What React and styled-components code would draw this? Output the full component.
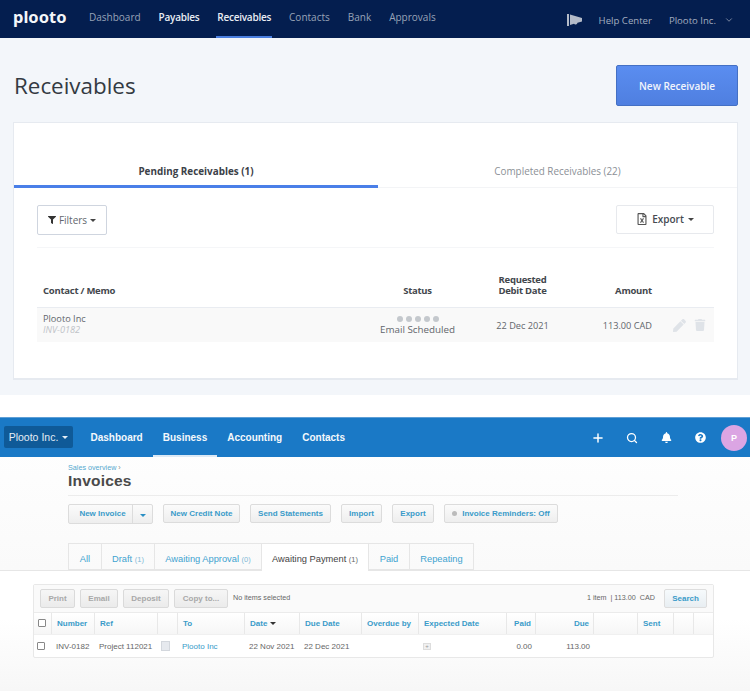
import React from 'react'
import styled, { createGlobalStyle } from 'styled-components'
import { FaBell, FaFilter, FaPen, FaQuestionCircle, FaRegFileExcel, FaTrash } from 'react-icons/fa'
import { FiChevronDown, FiPlus, FiSearch } from 'react-icons/fi'

const Global = createGlobalStyle`
  html, body { margin: 0; padding: 0; background: #fff; }
  body { width: 750px; height: 691px; overflow: hidden; font-family: "Open Sans", sans-serif; }
  * { box-sizing: border-box; }
`

const invoiceCols = '18px 43px 63px 20px 67px 55px 62px 57px 88px 29px 58px 44px 36px 20px 19px'

const App = () => {
  return (
    <>
      <Global />
      <Plooto>
        <TopNav>
          <Logo>plooto</Logo>
          <TopLinks>
            <TopLink>Dashboard</TopLink>
            <TopLink $bright>Payables</TopLink>
            <TopLink $active>Receivables</TopLink>
            <TopLink>Contacts</TopLink>
            <TopLink>Bank</TopLink>
            <TopLink>Approvals</TopLink>
          </TopLinks>
          <TopRight>
            <svg width="15" height="12" viewBox="0 0 15 12">
              <path d="M0 0h2v12H0zM3 .5 15 4v3.5l-4.500 1.300a2 2 0 0 1-3.500 1L3 11z" fill="#b4bbc8" />
            </svg>
            <HelpText>Help Center</HelpText>
            <HelpText>Plooto Inc.</HelpText>
            <FiChevronDown size={10} color="#8f9ab0" />
          </TopRight>
        </TopNav>

        <PageHead>
          <PageTitle>Receivables</PageTitle>
          <PrimaryButton>New Receivable</PrimaryButton>
        </PageHead>

        <Card>
          <Tabs>
            <Tab $active>Pending Receivables (1)</Tab>
            <Tab>Completed Receivables (22)</Tab>
          </Tabs>
          <CardBody>
            <Toolbar>
              <FilterButton>
                <FaFilter size={8} color="#333" />
                Filters
                <Caret />
              </FilterButton>
              <ExportButton>
                <FaRegFileExcel size={12} color="#555" />
                Export
                <Caret />
              </ExportButton>
            </Toolbar>
            <HeadRow>
              <div>Contact / Memo</div>
              <Centered>Status</Centered>
              <Centered>Requested<br />Debit Date</Centered>
              <RightCell>Amount</RightCell>
            </HeadRow>
            <BodyRow>
              <div>
                <div>Plooto Inc</div>
                <Memo>INV-0182</Memo>
              </div>
              <StatusCell>
                <Dots>{[0, 1, 2, 3, 4].map((i) => <Dot key={i} />)}</Dots>
                Email Scheduled
              </StatusCell>
              <Centered>22 Dec 2021</Centered>
              <RightCell>113.00 CAD</RightCell>
              <Actions>
                <FaPen size={13} />
                <FaTrash size={12} />
              </Actions>
            </BodyRow>
          </CardBody>
        </Card>
      </Plooto>

      <Xero>
        <XeroNav>
          <OrgButton>Plooto Inc.<OrgCaret /></OrgButton>
          <XeroLinks>
            <XeroLink>Dashboard</XeroLink>
            <XeroLink $active>Business</XeroLink>
            <XeroLink>Accounting</XeroLink>
            <XeroLink>Contacts</XeroLink>
          </XeroLinks>
          <XeroIcons>
            <IconSlot><FiPlus size={14} strokeWidth={2.5} /></IconSlot>
            <IconSlot><FiSearch size={12} strokeWidth={2.5} /></IconSlot>
            <IconSlot><FaBell size={11} /></IconSlot>
            <IconSlot><FaQuestionCircle size={11} /></IconSlot>
            <Avatar>P</Avatar>
          </XeroIcons>
        </XeroNav>

        <Intro>
          <Crumb>Sales overview <span>›</span></Crumb>
          <InvoicesTitle>Invoices</InvoicesTitle>
          <Actionbar>
            <SplitButton>
              <SplitMain>New Invoice</SplitMain>
              <SplitArrow><Caret $color="#2a8fc4" /></SplitArrow>
            </SplitButton>
            <XeroButton $w={77}>New Credit Note</XeroButton>
            <XeroButton $w={81}>Send Statements</XeroButton>
            <XeroButton $w={41}>Import</XeroButton>
            <XeroButton $w={42}>Export</XeroButton>
            <XeroButton $w={114}><GreyDot />Invoice Reminders: Off</XeroButton>
          </Actionbar>
        </Intro>

        <XeroTabs>
          <XeroTab $w={34}>All</XeroTab>
          <XeroTab $w={54}>Draft <small>(1)</small></XeroTab>
          <XeroTab $w={108}>Awaiting Approval <small>(0)</small></XeroTab>
          <XeroTab $w={108} $active>Awaiting Payment <small>(1)</small></XeroTab>
          <XeroTab $w={42}>Paid</XeroTab>
          <XeroTab $w={65}>Repeating</XeroTab>
        </XeroTabs>

        <ListArea>
          <ListBox>
            <ListToolbar>
              <GreyButton $w={35}>Print</GreyButton>
              <GreyButton $w={38}>Email</GreyButton>
              <GreyButton $w={46}>Deposit</GreyButton>
              <GreyButton $w={54}>Copy to...</GreyButton>
              <Selected>No items selected</Selected>
              <Totals>1 item &nbsp;| 113.00 &nbsp;CAD</Totals>
              <SearchButton $w={43}>Search</SearchButton>
            </ListToolbar>
            <ColHead>
              <HeadCell $center><CheckBox /></HeadCell>
              <HeadCell>Number</HeadCell>
              <HeadCell>Ref</HeadCell>
              <HeadCell />
              <HeadCell>To</HeadCell>
              <HeadCell>Date <SortCaret /></HeadCell>
              <HeadCell>Due Date</HeadCell>
              <HeadCell>Overdue by</HeadCell>
              <HeadCell>Expected Date</HeadCell>
              <HeadCell $right>Paid</HeadCell>
              <HeadCell $right>Due</HeadCell>
              <HeadCell />
              <HeadCell>Sent</HeadCell>
              <HeadCell />
              <HeadCell />
            </ColHead>
            <DataRow>
              <DataCell $center><CheckBox /></DataCell>
              <DataCell>INV-0182</DataCell>
              <DataCell>Project 112021</DataCell>
              <DataCell><NoteIcon /></DataCell>
              <DataCell $link>Plooto Inc</DataCell>
              <DataCell>22 Nov 2021</DataCell>
              <DataCell>22 Dec 2021</DataCell>
              <DataCell />
              <DataCell><PlusBox>+</PlusBox></DataCell>
              <DataCell $right>0.00</DataCell>
              <DataCell $right>113.00</DataCell>
              <DataCell />
              <DataCell />
              <DataCell />
              <DataCell />
            </DataRow>
          </ListBox>
        </ListArea>
      </Xero>
    </>
  )
}

export default App

const Plooto = styled.section`
  height: 395px;
  background: #f3f6fa;
`
const TopNav = styled.header`
  height: 38px;
  background: #041e4f;
  display: flex;
  align-items: stretch;
  padding: 0 16px 0 13px;
`
const Logo = styled.div`
  font: 700 16.5px/33px "Noto Sans", sans-serif;
  color: #f4f6f9;
  width: 75px;
`
const TopLinks = styled.nav`
  display: flex;
  gap: 16px;
`
const TopLink = styled.a`
  font-size: 10px;
  font-weight: ${(p) => (p.$bright || p.$active ? 600 : 400)};
  letter-spacing: ${(p) => (p.$bright || p.$active ? '-.25px' : 0)};
  color: ${(p) => (p.$bright || p.$active ? '#e9edf4' : '#98a3b7')};
  line-height: 34px;
  padding: 0 1px;
  border-bottom: 2px solid ${(p) => (p.$active ? '#4a7fe0' : 'transparent')};
  height: 38px;
`
const TopRight = styled.div`
  margin-left: auto;
  display: flex;
  align-items: center;
  gap: 17px;
  padding-top: 2px;
  svg:last-child { margin-left: -9px; }
`
const HelpText = styled.span`
  font-size: 9.6px;
  color: #a3adbf;
`
const PageHead = styled.div`
  height: 84px;
  padding: 27px 12px 0 14px;
  display: flex;
  justify-content: space-between;
  align-items: flex-start;
`
const PageTitle = styled.h1`
  margin: 5px 0 0;
  font-size: 22.4px;
  line-height: 32px;
  font-weight: 400;
  color: #333a42;
`
const PrimaryButton = styled.button`
  width: 122px;
  height: 41px;
  border: 1px solid #4470c4;
  border-radius: 2px;
  background: linear-gradient(#5a8df0, #4f7fe0);
  color: #f2f5fc;
  font: 600 10px "Open Sans", sans-serif;
`
const Card = styled.div`
  margin: 0 12px 0 13px;
  height: 258px;
  background: #fff;
  border: 1px solid #e6eaf0;
  border-bottom-width: 2px;
`
const Tabs = styled.div`
  display: grid;
  grid-template-columns: 364px 1fr;
  height: 65px;
`
const Tab = styled.div`
  text-align: center;
  padding-top: 41px;
  font-size: 9.9px;
  font-weight: ${(p) => (p.$active ? 700 : 400)};
  color: ${(p) => (p.$active ? '#3c4148' : '#8b9096')};
  border-bottom: ${(p) => (p.$active ? '3px solid #4a7fe8' : '1px solid #f3f4f6')};
`
const CardBody = styled.div`
  padding: 17px 23px 0;
`
const Toolbar = styled.div`
  display: flex;
  justify-content: space-between;
  align-items: flex-start;
  height: 43px;
  border-bottom: 1px solid #f5f6f8;
`
const FilterButton = styled.button`
  width: 70px;
  height: 30px;
  background: #fff;
  border: 1px solid #cfd5df;
  border-radius: 2px;
  font: 400 10px "Open Sans", sans-serif;
  color: #62676e;
  display: flex;
  align-items: center;
  justify-content: center;
  gap: 3px;
`
const ExportButton = styled(FilterButton)`
  width: 98px;
  height: 29px;
  padding-bottom: 2px;
  border-color: #e7e9ed;
  font-weight: 600;
  color: #464b52;
  gap: 4px;
`
const Caret = styled.i`
  display: inline-block;
  width: 0;
  height: 0;
  border: 3px solid transparent;
  border-top-color: ${(p) => p.$color || '#444'};
  border-bottom-width: 0;
`
const rowGrid = `
  display: grid;
  grid-template-columns: 323px 115px 95px 82px 62px;
`
const HeadRow = styled.div`
  ${rowGrid}
  align-items: end;
  height: 60px;
  padding-bottom: 11px;
  font-size: 9.5px;
  letter-spacing: -.25px;
  line-height: 11px;
  font-weight: 700;
  color: #43474d;
  border-bottom: 1px solid #e9ecf1;
  & > div:first-child { padding-left: 6px; }
`
const Centered = styled.div`
  text-align: center;
`
const RightCell = styled.div`
  text-align: right;
`
const BodyRow = styled.div`
  ${rowGrid}
  align-items: center;
  height: 34px;
  background: #f9f9f9;
  font-size: 9.2px;
  line-height: 11px;
  color: #62666c;
  & > div:first-child { padding-left: 6px; margin-top: -2px; }
`
const StatusCell = styled(Centered)`
  font-size: 9.8px;
`
const Memo = styled.div`
  font-style: italic;
  color: #c0c3c8;
`
const Dots = styled.div`
  display: flex;
  justify-content: center;
  gap: 3px;
  margin-bottom: 2px;
`
const Dot = styled.span`
  width: 6px;
  height: 6px;
  border-radius: 50%;
  background: #c4c8cd;
`
const Actions = styled.div`
  display: flex;
  justify-content: flex-end;
  align-items: center;
  gap: 8px;
  padding-right: 8px;
  color: #dfe3e8;
`

const Xero = styled.section`
  margin-top: 22px;
  height: 274px;
  background: linear-gradient(#fff, #f6f6f6);
`
const XeroNav = styled.header`
  height: 40px;
  background: #1a79c6;
  border-top: 1px solid #5f9fd6;
  display: flex;
  align-items: stretch;
  padding-left: 4px;
`
const OrgButton = styled.div`
  width: 69px;
  height: 22px;
  margin-top: 8px;
  background: #0f5a98;
  border-radius: 2px;
  color: #e4edf5;
  font: 400 10.5px/22px "Liberation Sans", Arial, sans-serif;
  text-align: center;
`
const OrgCaret = styled(Caret)`
  border-top-color: #e4edf5;
  margin-left: 4px;
  vertical-align: 2px;
`
const XeroLinks = styled.nav`
  display: flex;
  margin-left: 7.5px;
`
const XeroLink = styled.a`
  padding: 0 10px;
  font: 700 10px/40px "Liberation Sans", Arial, sans-serif;
  color: #f3f8fc;
  border-bottom: 2px solid ${(p) => (p.$active ? '#dce9f5' : 'transparent')};
  height: 39px;
`
const XeroIcons = styled.div`
  margin-left: auto;
  display: flex;
  align-items: center;
  padding-right: 3px;
  color: #fff;
`
const IconSlot = styled.div`
  width: 34px;
  display: flex;
  justify-content: center;
`
const Avatar = styled.div`
  width: 26px;
  height: 26px;
  margin-left: 4px;
  border-radius: 50%;
  background: #dba5e3;
  color: #fff;
  font: 700 9px/26px "Liberation Sans", Arial, sans-serif;
  text-align: center;
`
const Intro = styled.div`
  margin-left: 68px;
  width: 610px;
  padding-top: 6px;
  height: 87px;
`
const Crumb = styled.div`
  font: 400 7.2px/9px "Liberation Sans", Arial, sans-serif;
  color: #55a9cf;
  span { color: #888; }
`
const InvoicesTitle = styled.h2`
  margin: 0;
  height: 24px;
  font: 700 15.5px/18px "Liberation Sans", Arial, sans-serif;
  color: #4a4a4a;
  border-bottom: 1px solid #ececec;
  letter-spacing: .2px;
`
const Actionbar = styled.div`
  display: flex;
  gap: 10px;
  margin-top: 8px;
`
const XeroButton = styled.div`
  width: ${(p) => p.$w}px;
  height: 19px;
  flex: none;
  border: 1px solid #dcdcdc;
  border-radius: 2px;
  background: linear-gradient(#fbfbfb, #eeeeee);
  font: 700 8px/18px "Liberation Sans", Arial, sans-serif;
  color: #3a9bc9;
  text-align: center;
  white-space: nowrap;
`
const SplitButton = styled.div`
  display: flex;
  width: 85px;
  height: 20px;
  border: 1px solid #dcdcdc;
  border-radius: 2px;
  background: linear-gradient(#fbfbfb, #eeeeee);
  flex: none;
`
const SplitMain = styled.div`
  width: 64px;
  padding-left: 4px;
  border-right: 1px solid #dcdcdc;
  font: 700 8px/18px "Liberation Sans", Arial, sans-serif;
  color: #3a9bc9;
  text-align: center;
`
const SplitArrow = styled.div`
  flex: 1;
  display: flex;
  align-items: center;
  justify-content: center;
  padding-top: 2px;
`
const GreyDot = styled.span`
  display: inline-block;
  width: 5px;
  height: 5px;
  margin-right: 5px;
  border-radius: 50%;
  background: #bbb;
`
const XeroTabs = styled.div`
  display: flex;
  margin-left: 69px;
  height: 28px;
  margin-top: -1px;
`
const XeroTab = styled.div`
  width: ${(p) => p.$w}px;
  height: ${(p) => (p.$active ? 28 : 27)}px;
  flex: none;
  border: 1px solid #e6e6e6;
  border-bottom-width: ${(p) => (p.$active ? 0 : 1)}px;
  margin-left: -1px;
  background: ${(p) => (p.$active ? '#fff' : 'transparent')};
  font: 400 9.3px/30px "Liberation Sans", Arial, sans-serif;
  color: ${(p) => (p.$active ? '#444' : '#3fa3d0')};
  text-align: center;
  white-space: nowrap;
  small { font-size: 7.5px; color: ${(p) => (p.$active ? '#666' : '#7fb9d6')}; }
`
const ListArea = styled.div`
  height: 120px;
  padding: 13px 36px 0 33px;
  background: linear-gradient(#fff 40%, #f7f7f7);
  margin-top: -1px;
  border-top: 1px solid #e6e6e6;
`
const ListBox = styled.div`
  border: 1px solid #e8e8e8;
  border-radius: 2px;
  background: #fff;
  width: 681px;
`
const ListToolbar = styled.div`
  height: 28px;
  background: #fafafa;
  display: flex;
  align-items: center;
  gap: 5px;
  padding: 0 6px;
  border-bottom: 1px solid #ebebeb;
`
const GreyButton = styled.div`
  width: ${(p) => p.$w}px;
  height: 19px;
  flex: none;
  border: 1px solid #dadada;
  border-radius: 2px;
  background: linear-gradient(#f6f6f6, #ebebeb);
  font: 700 8px/17px "Liberation Sans", Arial, sans-serif;
  color: #a8a8a8;
  text-align: center;
`
const Selected = styled.span`
  font: 400 7.2px "Liberation Sans", Arial, sans-serif;
  color: #666;
  margin-bottom: 3px;
`
const Totals = styled.span`
  margin-left: auto;
  margin-right: 4px;
  font: 400 7.2px "Liberation Sans", Arial, sans-serif;
  color: #666;
  margin-bottom: 3px;
`
const SearchButton = styled(XeroButton)`
  border-color: #ddd;
  background: linear-gradient(#f6fafc, #e8eef2);
`
const ColHead = styled.div`
  display: grid;
  grid-template-columns: ${invoiceCols};
  height: 21px;
  background: linear-gradient(#fff, #f6f6f6);
`
const HeadCell = styled.div`
  display: flex;
  align-items: center;
  gap: 3px;
  justify-content: ${(p) => (p.$center ? 'center' : p.$right ? 'flex-end' : 'flex-start')};
  padding: 0 4px 0 5px;
  border-right: 1px solid #e8e8e8;
  font: 700 8px "Liberation Sans", Arial, sans-serif;
  color: #3a9bc9;
  white-space: nowrap;
  &:last-child { border-right: 0; }
  &:first-child { padding: 0 0 1px 4px; justify-content: flex-start; }
`
const SortCaret = styled(Caret)`
  border-top-color: #333;
`
const DataRow = styled.div`
  display: grid;
  grid-template-columns: ${invoiceCols};
  height: 23px;
  border-top: 1px solid #f0f0f0;
`
const DataCell = styled.div`
  display: flex;
  align-items: center;
  justify-content: ${(p) => (p.$center ? 'center' : p.$right ? 'flex-end' : 'flex-start')};
  padding: 0 4px;
  font: 400 8px "Liberation Sans", Arial, sans-serif;
  color: ${(p) => (p.$link ? '#3a9bc9' : '#666')};
  white-space: nowrap;
  &:first-child { padding: 0 0 1px 3px; justify-content: flex-start; }
`
const CheckBox = styled.span`
  display: block;
  width: 8px;
  height: 8px;
  border: 1px solid #888;
  border-radius: 1px;
  background: #fff;
`
const NoteIcon = styled.span`
  display: block;
  width: 9px;
  height: 10px;
  margin-left: -1px;
  background: #e6e9ee;
  border: 1px solid #d3d7dd;
`
const PlusBox = styled.span`
  display: block;
  width: 8px;
  height: 7px;
  border: 1px solid #ddd;
  background: #f0f0f0;
  color: #999;
  font-size: 6px;
  line-height: 5px;
  text-align: center;
`
